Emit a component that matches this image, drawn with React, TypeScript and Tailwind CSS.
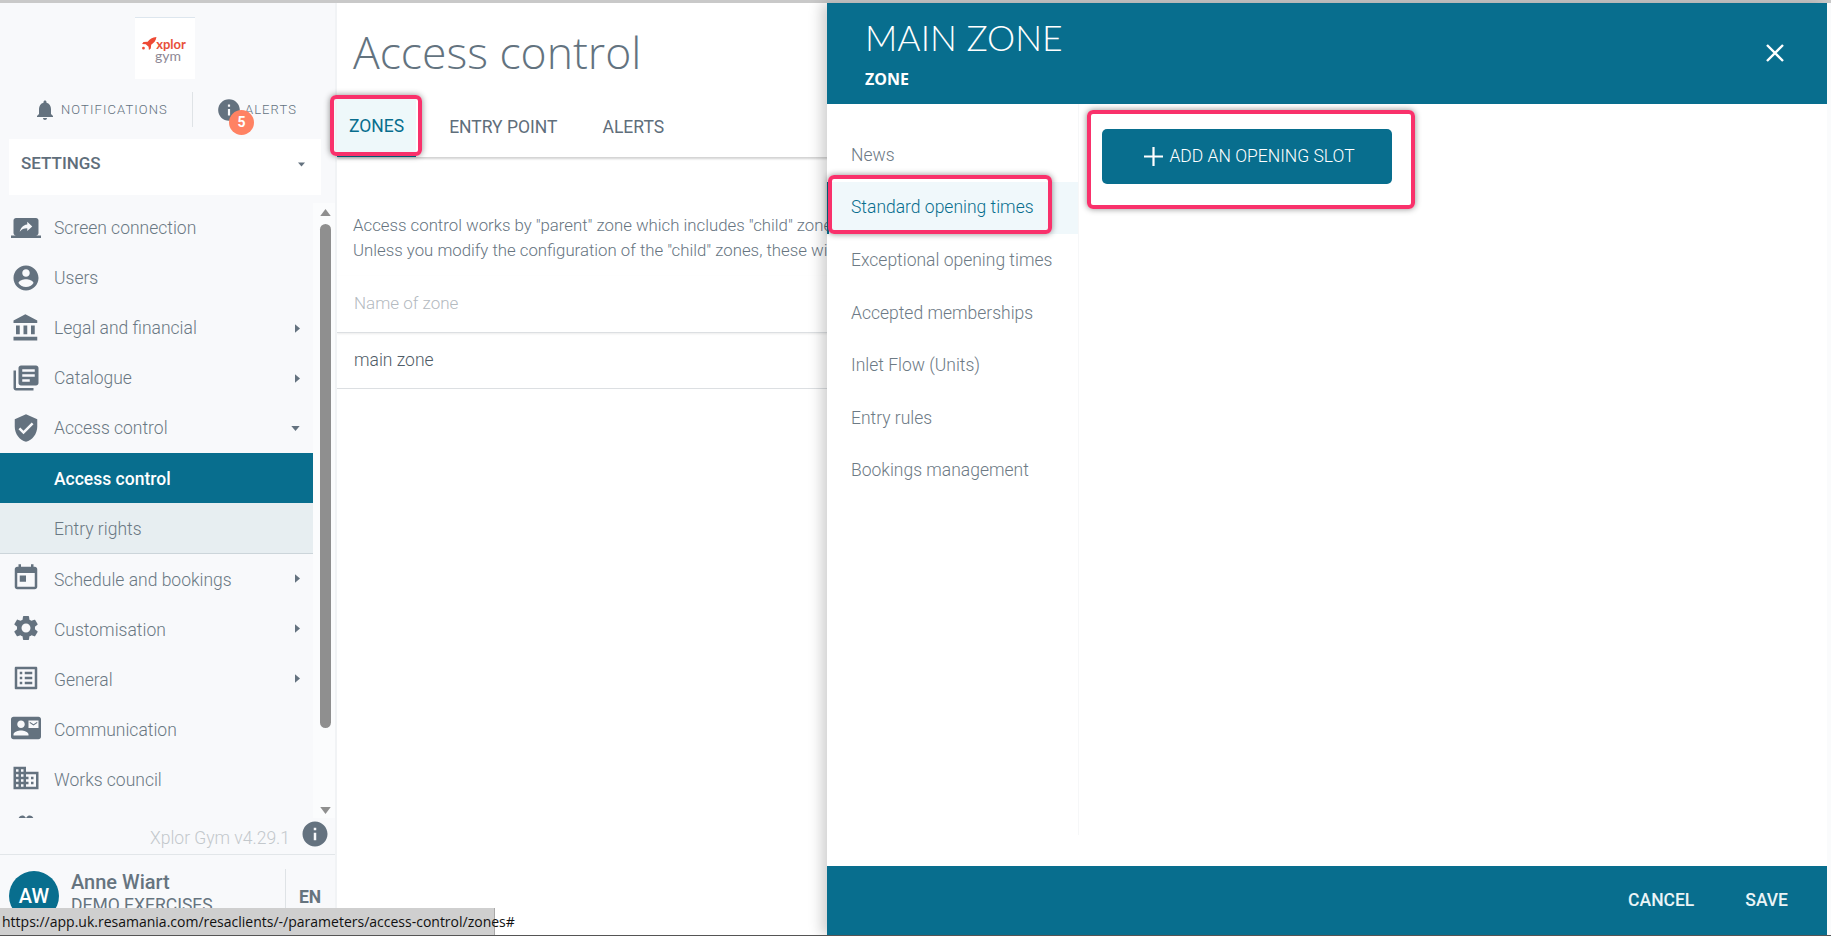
import React from "react";

const P: Record<string, string> = {
  screen: "M20 18c1.1 0 1.99-.9 1.99-2L22 6c0-1.11-.9-2-2-2H4c-1.11 0-2 .89-2 2v10c0 1.1.89 2 2 2H0v2h24v-2h-4zm-7-3.53v-2.19c-2.78 0-4.61.85-6 2.72.56-2.67 2.11-5.33 6-5.87V7l4 3.73-4 3.74z",
  user: "M12 2C6.48 2 2 6.48 2 12s4.48 10 10 10 10-4.48 10-10S17.52 2 12 2zm0 3c1.66 0 3 1.34 3 3s-1.34 3-3 3-3-1.34-3-3 1.34-3 3-3zm0 14.2c-2.5 0-4.71-1.28-6-3.22.03-1.99 4-3.08 6-3.08 1.99 0 5.97 1.09 6 3.08-1.29 1.94-3.5 3.22-6 3.22z",
  bank: "M4 10v7h3v-7H4zm6 0v7h3v-7h-3zM2 22h19v-3H2v3zm14-12v7h3v-7h-3zm-4.5-9L2 6v2h19V6l-9.5-5z",
  books: "M4 6H2v14c0 1.1.9 2 2 2h14v-2H4V6zm16-4H8c-1.1 0-2 .9-2 2v12c0 1.1.9 2 2 2h12c1.1 0 2-.9 2-2V4c0-1.1-.9-2-2-2zm-1 9H9V9h10v2zm-4 4H9v-2h6v2zm4-8H9V5h10v2z",
  shield: "M12 1L3 5v6c0 5.55 3.84 10.74 9 12 5.16-1.26 9-6.45 9-12V5l-9-4zm-2 16l-4-4 1.41-1.41L10 14.17l6.59-6.59L18 9l-8 8z",
  today: "M19 3h-1V1h-2v2H8V1H6v2H5c-1.11 0-1.99.9-1.99 2L3 19c0 1.1.89 2 2 2h14c1.1 0 2-.9 2-2V5c0-1.1-.9-2-2-2zm0 16H5V8h14v11zM7 10h5v5H7z",
  gear: "M19.14 12.94c.04-.3.06-.61.06-.94 0-.32-.02-.64-.07-.94l2.03-1.58c.18-.14.23-.41.12-.61l-1.92-3.32c-.12-.22-.37-.29-.59-.22l-2.39.96c-.5-.38-1.03-.7-1.62-.94l-.36-2.54c-.04-.24-.24-.41-.48-.41h-3.84c-.24 0-.43.17-.47.41l-.36 2.54c-.59.24-1.13.57-1.62.94l-2.39-.96c-.22-.08-.47 0-.59.22L2.74 8.87c-.12.21-.08.47.12.61l2.03 1.58c-.05.3-.09.63-.09.94s.02.64.07.94l-2.03 1.58c-.18.14-.23.41-.12.61l1.92 3.32c.12.22.37.29.59.22l2.39-.96c.5.38 1.03.7 1.62.94l.36 2.54c.05.24.24.41.48.41h3.84c.24 0 .44-.17.47-.41l.36-2.54c.59-.24 1.13-.56 1.62-.94l2.39.96c.22.08.47 0 .59-.22l1.92-3.32c.12-.22.07-.47-.12-.61l-2.01-1.58zM12 15.6c-1.98 0-3.6-1.62-3.6-3.6s1.62-3.6 3.6-3.6 3.6 1.62 3.6 3.6-1.62 3.6-3.6 3.6z",
  list: "M19 5v14H5V5h14m1.1-2H3.9c-.5 0-.9.4-.9.9v16.2c0 .4.4.9.9.9h16.2c.4 0 .9-.5.9-.9V3.9c0-.5-.5-.9-.9-.9zM11 7h6v2h-6V7zm0 4h6v2h-6v-2zm0 4h6v2h-6zM7 7h2v2H7zm0 4h2v2H7zm0 4h2v2H7z",
  contact: "M21 8V7l-3 2-3-2v1l3 2 3-2zm1-5H2C.9 3 0 3.9 0 5v14c0 1.1.9 2 2 2h20c1.1 0 1.99-.9 1.99-2L24 5c0-1.1-.9-2-2-2zM8 6c1.66 0 3 1.34 3 3s-1.34 3-3 3-3-1.34-3-3 1.34-3 3-3zm6 12H2v-1c0-2 4-3.1 6-3.1s6 1.1 6 3.1v1zm8-6h-8V6h8v6z",
  business: "M12 7V3H2v18h20V7H12zM6 19H4v-2h2v2zm0-4H4v-2h2v2zm0-4H4V9h2v2zm0-4H4V5h2v2zm4 12H8v-2h2v2zm0-4H8v-2h2v2zm0-4H8V9h2v2zm0-4H8V5h2v2zm10 12h-8v-2h2v-2h-2v-2h2v-2h-2V9h8v10zm-2-8h-2v2h2v-2zm0 4h-2v2h2v-2z",
  bell: "M12 22c1.1 0 2-.9 2-2h-4c0 1.1.89 2 2 2zm6-6v-5c0-3.07-1.64-5.64-4.5-6.32V4c0-.83-.67-1.5-1.5-1.5s-1.5.67-1.5 1.5v.68C7.63 5.36 6 7.92 6 11v5l-2 2v1h16v-1l-2-2z",
  info: "M12 2C6.48 2 2 6.48 2 12s4.48 10 10 10 10-4.48 10-10S17.52 2 12 2zm1 15h-2v-6h2v6zm0-8h-2V7h2v2z",
  gift: "M20 6h-2.18c.11-.31.18-.65.18-1 0-1.66-1.34-3-3-3-1.05 0-1.96.54-2.5 1.35l-.5.67-.5-.68C10.96 2.54 10.05 2 9 2 7.34 2 6 3.34 6 5c0 .35.07.69.18 1H4c-1.11 0-1.99.89-1.99 2L2 19c0 1.11.89 2 2 2h16c1.11 0 2-.89 2-2V8c0-1.11-.89-2-2-2z",
};

function Icon({ name, className }: { name: string; className: string }) {
  return (
    <svg viewBox="0 0 24 24" className={className} fill="currentColor">
      <path d={P[name]} />
    </svg>
  );
}

function Caret({ dir }: { dir: "right" | "down" }) {
  return dir === "right" ? (
    <svg viewBox="0 0 6 10" className="w-[5px] h-[9px] text-[#64727f]" fill="currentColor">
      <path d="M0 0l6 5-6 5z" />
    </svg>
  ) : (
    <svg viewBox="0 0 10 6" className="w-[9px] h-[5px] text-[#64727f]" fill="currentColor">
      <path d="M0 0h10L5 6z" />
    </svg>
  );
}

type Item = { icon: string; label: string; caret?: "right" | "down"; low?: boolean };

const nav: Item[] = [
  { icon: "screen", label: "Screen connection" },
  { icon: "user", label: "Users" },
  { icon: "bank", label: "Legal and financial", caret: "right" },
  { icon: "books", label: "Catalogue", caret: "right" },
  { icon: "shield", label: "Access control", caret: "down" },
];
const nav2: Item[] = [
  { icon: "today", label: "Schedule and bookings", caret: "right", low: true },
  { icon: "gear", label: "Customisation", caret: "right", low: true },
  { icon: "list", label: "General", caret: "right", low: true },
  { icon: "contact", label: "Communication", low: true },
  { icon: "business", label: "Works council", low: true },
  { icon: "gift", label: "" },
];

function NavRow({ icon, label, caret, low }: Item) {
  return (
    <div className="h-[50px] shrink-0 flex items-center pl-[11px] pr-[13px] text-[#64727f]">
      <Icon name={icon} className="w-[30px] h-[30px] shrink-0" />
      <span className={(low ? "pt-[4px] " : "") + "ml-[13px] flex-1 text-[17.5px] font-light text-[#6a7883] whitespace-nowrap"}>{label}</span>
      {caret && <Caret dir={caret} />}
    </div>
  );
}

function Sidebar() {
  return (
    <aside className="w-[337px] shrink-0 flex flex-col bg-[#f8f9fb] border-r-2 border-[#f1f3f5] overflow-hidden">
      <div className="ml-[135px] mt-[14px] w-[60px] h-[62px] bg-white border-t border-[#dde6ee] flex flex-col items-center justify-center">
        <div className="flex items-center mt-[2px] -ml-[2px]">
          <svg viewBox="0 0 16 14" className="w-[15px] h-[13px] text-[#ee4a35]" fill="currentColor">
            <path d="M15.5 0C11 .4 8 2.4 6 5L1.5 5.5 0 7.5l4 .3 3 2.7.4 3.4 2-1.6.4-4C12.6 6.6 15 4 15.5 0zM1.5 10.5a1.5 1.5 0 1 0 0 3 1.5 1.5 0 0 0 0-3z" />
          </svg>
          <span className="font-['Lato',sans-serif] font-bold text-[13px] leading-[12px] text-[#e8503a] -ml-[1px]">xplor</span>
        </div>
        <span className="font-['Lato',sans-serif] font-normal text-[14px] leading-[12px] text-[#8d8894] ml-[6px]">gym</span>
      </div>
      <div className="mt-[13px] h-[35px] flex items-center text-[#64727f]">
        <Icon name="bell" className="ml-[33px] w-[24px] h-[24px] shrink-0" />
        <span className="ml-[4px] text-[13px] font-light tracking-[1.1px]">NOTIFICATIONS</span>
        <div className="ml-[24px] w-px h-[35px] bg-[#dfe3e6]" />
        <div className="relative ml-[23px] w-[26px] h-[26px] shrink-0">
          <Icon name="info" className="w-[26px] h-[26px]" />
          <span className="absolute left-[13px] top-[13px] w-[25px] h-[25px] rounded-full bg-[#ff8263] text-white text-[14px] font-bold flex items-center justify-center">5</span>
        </div>
        <span className="ml-[3px] text-[13px] font-light tracking-[1.1px]">ALERTS</span>
      </div>
      <div className="mt-[12px] mx-[9px] w-[312px] h-[56px] shrink-0 bg-white flex items-center justify-between pl-[12px] pr-[16px] pb-[6px]">
        <span className="text-[17px] font-medium text-[#5f6e7b]">SETTINGS</span>
        <svg viewBox="0 0 10 6" className="w-[7px] h-[5px] text-[#64727f]" fill="currentColor"><path d="M0 0h10L5 6z" /></svg>
      </div>
      <div className="mt-[8px] h-[615px] shrink-0 flex">
        <div className="w-[313px] shrink-0 flex flex-col overflow-hidden">
          {nav.map((n) => (
            <NavRow key={n.icon} {...n} />
          ))}
          <div className="h-[50px] shrink-0 bg-[#086e8e] flex items-center pl-[54px] pt-[2px] text-[17.5px] font-medium text-white">Access control</div>
          <div className="h-[51px] shrink-0 bg-[#e7eef1] border-b border-[#ccd5da] flex items-center pl-[54px] pt-[2px] text-[17.5px] font-light text-[#6a7883]">Entry rights</div>
          <div className="-mt-px flex flex-col">
            {nav2.map((n) => (
              <NavRow key={n.icon} {...n} />
            ))}
          </div>
        </div>
        <div className="w-[22px] shrink-0 bg-[#fbfcfd] flex flex-col items-center pt-[6px] pb-[4px] pl-[2px]">
          <svg viewBox="0 0 12 8" className="w-[11px] h-[7px] text-[#8f8f8f]" fill="currentColor"><path d="M6 0l6 8H0z" /></svg>
          <div className="mt-[8px] w-[11px] h-[504px] rounded-full bg-[#8f8f8f]" />
          <div className="flex-1" />
          <svg viewBox="0 0 12 8" className="w-[11px] h-[7px] text-[#8f8f8f]" fill="currentColor"><path d="M0 0h12L6 8z" /></svg>
        </div>
      </div>
      <div className="h-[37px] shrink-0 flex items-center justify-end pr-[5px] border-b border-[#e2e6e9]">
        <span className="pt-[4px] text-[17.5px] font-light text-[#c3c8cc]">Xplor Gym v4.29.1</span>
        <Icon name="info" className="ml-[10px] mb-[4px] w-[30px] h-[30px] text-[#64727f]" />
      </div>
      <div className="h-[80px] shrink-0 flex items-start">
        <div className="ml-[9px] mt-[16px] w-[50px] h-[50px] rounded-full bg-[#086e8e] text-white flex items-center justify-center text-[20px] font-medium">AW</div>
        <div className="ml-[12px] mt-[15px] w-[214px]">
          <div className="text-[20px] font-medium leading-[24px] text-[#66747f]">Anne Wiart</div>
          <div className="text-[17.5px] font-normal leading-[23px] text-[#66747f]">DEMO EXERCISES</div>
        </div>
        <div className="mt-[14px] h-[40px] w-px bg-[#dfe3e6]" />
        <div className="ml-[13px] mt-[29px] text-[17.5px] font-bold text-[#66747f]">EN</div>
      </div>
    </aside>
  );
}

function Main() {
  return (
    <main className="flex-1 min-w-0 bg-white overflow-hidden">
      <div className="h-[92px] pl-[16px] flex items-center">
        <h1 className="font-['Open_Sans',sans-serif] font-light text-[44.5px] text-[#63737f] whitespace-nowrap leading-none mt-[6px]">Access control</h1>
      </div>
      <div className="h-[62px] flex items-stretch gap-[21px] shadow-[0_2px_2px_rgba(0,0,0,0.18)] text-[17.5px]">
        <div className="px-[12px] pt-[2px] flex items-center bg-[#eef8fa] text-[#086e8e] border-b-2 border-[#086e8e]">ZONES</div>
        <div className="px-[12px] pt-[2px] flex items-center text-[#5f6e7b]">ENTRY POINT</div>
        <div className="px-[12px] pt-[2px] flex items-center text-[#5f6e7b]">ALERTS</div>
      </div>
      <div className="mt-[56px] pl-[16px] text-[16.8px] font-light leading-[25px] text-[#66747f] whitespace-nowrap">
        <p>Access control works by "parent" zone which includes "child" zones.</p>
        <p>Unless you modify the configuration of the "child" zones, these will inherit the settings.</p>
      </div>
      <div className="mt-[13px] h-[57px] pl-[17px] flex items-center text-[17px] font-light text-[#b4babf] border-b border-[#dcdfe2] shadow-[0_1px_2px_rgba(0,0,0,0.08)]">Name of zone</div>
      <div className="h-[56px] pl-[17px] flex items-center text-[17.5px] font-light text-[#4f5c67] border-b border-[#dcdfe2]">main zone</div>
    </main>
  );
}

const items = ["News", "Standard opening times", "Exceptional opening times", "Accepted memberships", "Inlet Flow (Units)", "Entry rules", "Bookings management"];

function Drawer() {
  return (
    <section className="absolute left-[827px] top-[3px] w-[1000px] h-[932px] bg-white flex flex-col shadow-[-6px_0_12px_rgba(0,0,0,0.18)]">
      <header className="h-[101px] shrink-0 bg-[#086e8e] text-white flex items-start justify-between pl-[38px] pr-[43px]">
        <div>
          <div className="mt-[15px] font-['Lato',sans-serif] font-light text-[35.6px] leading-[40px] whitespace-nowrap">MAIN ZONE</div>
          <div className="mt-[11px] font-['Open_Sans',sans-serif] font-bold text-[16px] leading-[20px]">ZONE</div>
        </div>
        <svg viewBox="0 0 18 18" className="mt-[41px] w-[18px] h-[18px]" stroke="currentColor" strokeWidth="2.4" fill="none">
          <path d="M1 1l16 16M17 1L1 17" />
        </svg>
      </header>
      <div className="flex-1 flex min-h-0">
        <nav className="w-[252px] h-[731px] shrink-0 pt-[25px] border-r border-[#f6f7f8] flex flex-col">
          {items.map((t, i) => (
            <div
              key={t}
              className={
                i === 1
                  ? "h-[52.5px] pl-[22px] pb-[2px] flex items-center text-[17.5px] font-light text-[#086e8e] bg-[#f0f8fb] border-l-2 border-[#086e8e] whitespace-nowrap"
                  : "h-[52.5px] pl-[24px] flex items-center text-[17.5px] font-light text-[#6d7a85] whitespace-nowrap"
              }
            >
              {t}
            </div>
          ))}
        </nav>
        <div className="pl-[23px] pt-[25px]">
          <button className="w-[290px] h-[55px] rounded-[5px] bg-[#086e8e] text-white flex items-center justify-center pl-[5px] text-[17.5px] font-light">
            <svg viewBox="0 0 19 19" className="w-[19px] h-[19px] mr-[6px]" stroke="currentColor" strokeWidth="2.2" fill="none">
              <path d="M9.5 0v19M0 9.5h19" />
            </svg>
            ADD AN OPENING SLOT
          </button>
        </div>
      </div>
      <footer className="h-[69px] shrink-0 bg-[#086e8e] flex items-center justify-end pr-[39px] gap-[51px] text-[17.5px] font-medium text-[#eaf4f7]">
        <span>CANCEL</span>
        <span>SAVE</span>
      </footer>
    </section>
  );
}

export default function App() {
  const frame = "absolute border-[4px] border-[#f9316b] rounded-[6px] shadow-[0_0_6px_rgba(0,0,0,0.45)] pointer-events-none";
  return (
    <div className="relative w-[1831px] h-[936px] overflow-hidden bg-white font-['Roboto',sans-serif] flex flex-col">
      <div className="h-[3px] shrink-0 bg-[#c9c9c9]" />
      <div className="flex-1 flex min-h-0">
        <Sidebar />
        <Main />
      </div>
      <Drawer />
      <div className="absolute right-0 top-[3px] bottom-0 w-[4px] bg-[#fafbfc]" />
      <div className={frame + " left-[330px] top-[95px] w-[92px] h-[61px]"} />
      <div className={frame + " left-[828px] top-[175px] w-[224px] h-[59px]"} />
      <div className={frame + " left-[1087px] top-[110px] w-[328px] h-[99px]"} />
      <div className="absolute left-0 bottom-[1px] w-[495px] h-[27px] bg-[#cfcfcf] flex items-center pl-[2px] font-['Open_Sans',sans-serif] text-[14px] text-[#111] border-r border-[#aaa] whitespace-nowrap">
        https://app.uk.resamania.com/resaclients/-/parameters/access-control/zones#
      </div>
      <div className="absolute left-0 right-0 bottom-0 h-px bg-[#555]" />
    </div>
  );
}
